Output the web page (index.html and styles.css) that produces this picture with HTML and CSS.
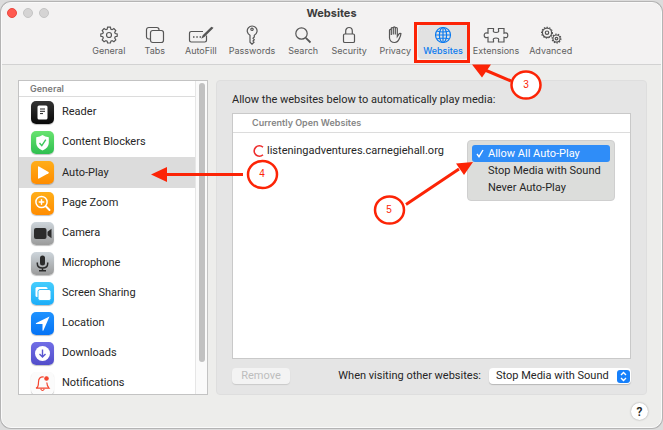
FILE: index.html
```html
<!DOCTYPE html>
<html lang="en">
<head>
    <meta charset="UTF-8">
    <meta name="viewport" content="width=device-width, initial-scale=1.0">
    <title>Websites</title>
    <link rel="stylesheet" href="styles.css">
</head>
<body>
    <div class="window">
        <header class="titlebar">
            <div class="title-row">
                <div class="lights">
                    <button class="light close" aria-label="Close"></button>
                    <button class="light" aria-label="Minimize"></button>
                    <button class="light" aria-label="Zoom"></button>
                </div>
                <h1>Websites</h1>
            </div>
            <nav class="toolbar">
                <button class="tab">
                    <svg width="18" height="18" viewBox="0 0 18 18"><path d="M7.6 1.2h2.8l.5 2 1.2.5 1.8-1.1 1.9 1.9-1.1 1.8.5 1.2 2 .5v2.2l-2 .6-.5 1.2 1.1 1.8-1.9 1.9-1.8-1.1-1.2.5-.5 1.9H7.6l-.5-1.9-1.2-.5-1.8 1.1-1.9-1.9 1.1-1.8-.5-1.2-2-.6V8l2-.5.5-1.2-1.1-1.8 1.9-1.9 1.8 1.1 1.2-.5z"/><circle cx="9" cy="9" r="2.5"/></svg>
                    <span>General</span>
                </button>
                <button class="tab">
                    <svg width="20" height="18" viewBox="0 0 20 18"><path d="M5.500 13H3.700A2.200 2.200 0 0 1 1.500 10.800V3.700A2.200 2.200 0 0 1 3.700 1.500h8.100A2.200 2.200 0 0 1 14 3.700V4.500"/><rect x="5.500" y="4.500" width="13" height="12" rx="2.200"/></svg>
                    <span>Tabs</span>
                </button>
                <button class="tab">
                    <svg width="26" height="18" viewBox="0 0 26 18"><path d="M15 5.500H3.200A1.700 1.700 0 0 0 1.500 7.200v7.100A1.700 1.700 0 0 0 3.200 16h13.600a1.700 1.700 0 0 0 1.700-1.700V9.500"/><path d="M24.500 2L16 10.500l-1.500.8.700-1.600L23.500 1.500z"/><path class="dots" d="M5 11h1.500M8.300 11h1.500M11.600 11h1.500"/></svg>
                    <span>AutoFill</span>
                </button>
                <button class="tab">
                    <svg width="14" height="20" viewBox="0 0 14 20"><path d="M5 10.300A4.900 4.900 0 1 1 9.300 10.300V12l-1.300 1.300 1.300 1.400-1.300 1.400 1 1.100-2 2-2-2z"/><circle cx="7" cy="4.300" r="1.200"/></svg>
                    <span>Passwords</span>
                </button>
                <button class="tab">
                    <svg width="18" height="18" viewBox="0 0 18 18"><circle cx="7.500" cy="7.500" r="5.700"/><path class="heavy" d="M11.800 11.800L16.500 16.500"/></svg>
                    <span>Search</span>
                </button>
                <button class="tab">
                    <svg width="14" height="18" viewBox="0 0 14 18"><rect x="1.500" y="8" width="11" height="8.500" rx="1.300"/><path d="M3.700 8V5a3.300 3.500 0 0 1 6.600 0v3"/></svg>
                    <span>Security</span>
                </button>
                <button class="tab">
                    <svg width="18" height="18" viewBox="0 0 18 18"><path d="M3.500 10V4.300q0-1 .9-1t.9 1V9V2.500q0-1 1-1t1 1V8.500V1.900q0-1 1-1t1 1V8.500V2.500q0-1 1-1t1 1V10.500l1.700-2.600q.8-1 1.900-.3-.2 2.200-1.300 4.400Q12 16.500 8.700 16.500 4 16.500 3.500 12z"/></svg>
                    <span>Privacy</span>
                </button>
                <button class="tab active">
                    <svg width="18" height="18" viewBox="0 0 18 18"><circle cx="9" cy="9" r="7.500"/><ellipse cx="9" cy="9" rx="3.600" ry="7.500"/><path d="M9 1.500v15M1.500 9h15M2.800 5Q9 7 15.200 5M2.800 13Q9 11 15.200 13"/></svg>
                    <span>Websites</span>
                </button>
                <button class="tab">
                    <svg width="26" height="18" viewBox="0 0 26 18"><path d="M5 2.500H10.500V4Q9.500 6.500 13 6.500T15.500 4V2.500H21V7.300Q24.800 6 24.800 9.300T21 11.300V16H15.500V14.500Q16.500 12 13 12T10.500 14.500V16H5V11.300Q1.200 12.500 1.200 9.300T5 7.300z"/></svg>
                    <span>Extensions</span>
                </button>
                <button class="tab">
                    <svg width="24" height="18" viewBox="0 0 24 18"><circle class="teeth" cx="8" cy="6.700" r="5.400"/><circle cx="8" cy="6.700" r="4.600"/><circle cx="8" cy="6.700" r="1.700"/><circle class="teeth" cx="17.500" cy="12.600" r="4.400"/><circle cx="17.500" cy="12.600" r="3.600"/><circle cx="17.500" cy="12.600" r="1.300"/></svg>
                    <span>Advanced</span>
                </button>
            </nav>
        </header>

        <main class="content">
            <aside class="sidebar">
                <div class="list">
                    <h2>General</h2>
                    <button class="item">
                        <span class="icon black"><svg viewBox="0 0 23 23"><rect x="6.500" y="4.500" width="10" height="14" rx="1.500" fill="#fff"/><path d="M9 8h5M9 10.300h5M9 12.600h3" stroke="#222"/></svg></span>
                        Reader
                    </button>
                    <button class="item">
                        <span class="icon green"><svg viewBox="0 0 23 23"><path d="M11.500 4Q14 6 17.800 6.300V12q0 4.500-6.300 7.500Q5.200 16.500 5.200 12V6.300Q9 6 11.500 4z" fill="#fff"/><path d="M8.500 12l2.300 2.700 4-6" fill="none" stroke="#3cc75a" stroke-width="1.400"/></svg></span>
                        Content Blockers
                    </button>
                    <button class="item selected">
                        <span class="icon orange"><svg viewBox="0 0 23 23"><path d="M7 6v11q0 1 1 .5l9.500-5.300q.8-.7 0-1.300L8 5.500Q7 5 7 6z" fill="#fff"/></svg></span>
                        Auto-Play
                    </button>
                    <button class="item">
                        <span class="icon orange"><svg viewBox="0 0 23 23" fill="none" stroke="#fff" stroke-width="1.500" stroke-linecap="round"><circle cx="10.500" cy="10" r="5.600"/><path d="M8.300 10h4.400M10.500 7.800v4.400"/><path d="M14.800 14.300l3.700 3.700" stroke-width="2"/></svg></span>
                        Page Zoom
                    </button>
                    <button class="item">
                        <span class="icon gray"><svg viewBox="0 0 23 23" fill="#2b2b2b"><rect x="3" y="6" width="12.500" height="11" rx="2"/><path d="M16.500 9.700L20.500 6.700v9.600l-4-3z"/></svg></span>
                        Camera
                    </button>
                    <button class="item">
                        <span class="icon gray"><svg viewBox="0 0 23 23"><rect x="9" y="3.500" width="5" height="10" rx="2.500" fill="#2b2b2b"/><path d="M6.300 10.500v1q0 4.500 5.200 4.500t5.200-4.500v-1M11.500 16v2.500M8 18.700h7" fill="none" stroke="#2b2b2b" stroke-width="1.500"/></svg></span>
                        Microphone
                    </button>
                    <button class="item">
                        <span class="icon sky"><svg viewBox="0 0 23 23" fill="#fff"><rect x="4.500" y="5" width="12" height="10" rx="1.500"/><rect x="7" y="7.500" width="13" height="11" rx="2" stroke="#31bdfb"/></svg></span>
                        Screen Sharing
                    </button>
                    <button class="item">
                        <span class="icon blue"><svg viewBox="0 0 23 23"><path d="M18.500 4.500L12.500 18.300q-.7 1-1 0V12H5.200q-1-.4 0-1z" fill="#fff"/></svg></span>
                        Location
                    </button>
                    <button class="item">
                        <span class="icon purple"><svg viewBox="0 0 23 23"><circle cx="11.500" cy="11.500" r="7.500" fill="#fff"/><path d="M11.500 7.500v7.500M8.500 12l3 3 3-3" fill="none" stroke="#5a56d0" stroke-width="1.400"/></svg></span>
                        Downloads
                    </button>
                    <button class="item">
                        <span class="icon white"><svg viewBox="0 0 23 23" fill="none" stroke="#f4452f" stroke-width="1.200"><path d="M12.800 5Q7.500 4.500 7.500 10T5 16.200H18Q16 14 15.800 10.500M9.700 17q1.800 3 3.600 0"/><circle cx="15.500" cy="6.500" r="1.700" fill="#f4452f"/></svg></span>
                        Notifications
                    </button>
                </div>
                <div class="scrollbar"><div class="thumb"></div></div>
            </aside>

            <section class="panel">
                <p class="lead">Allow the websites below to automatically play media:</p>
                <div class="sites">
                    <h3>Currently Open Websites</h3>
                    <div class="site">
                        <svg class="favicon" width="12" height="14" viewBox="0 0 12 14"><path d="M11 3.300A5.200 5.200 0 1 0 11 10.700"/></svg>
                        <span>listeningadventures.carnegiehall.org</span>
                        <div class="menu" role="menu">
                            <button class="option checked" role="menuitemradio" aria-checked="true">
                                <svg class="check" width="8" height="9" viewBox="0 0 8 9"><path d="M1 5l2 2.700L7 1"/></svg>
                                Allow All Auto-Play
                            </button>
                            <button class="option" role="menuitemradio" aria-checked="false">Stop Media with Sound</button>
                            <button class="option" role="menuitemradio" aria-checked="false">Never Auto-Play</button>
                        </div>
                    </div>
                </div>
                <div class="actions">
                    <button class="remove" disabled>Remove</button>
                    <label for="otherSites">When visiting other websites:</label>
                    <div class="popup">
                        <select id="otherSites">
                            <option>Stop Media with Sound</option>
                            <option>Allow All Auto-Play</option>
                            <option>Never Auto-Play</option>
                        </select>
                        <svg class="arrows" width="13" height="13" viewBox="0 0 13 13"><rect width="13" height="13" rx="3"/><path d="M4 5l2.500-2.500L9 5M4 8l2.500 2.500L9 8"/></svg>
                    </div>
                </div>
            </section>
        </main>

        <footer class="footer">
            <button class="help" aria-label="Help">?</button>
        </footer>
    </div>

    <!-- numbered step callouts -->
    <svg class="callouts" width="663" height="430" viewBox="0 0 663 430">
        <rect x="415.500" y="23.500" width="53" height="38"/>
        <path d="M511 81L485 70M243 174.500H165M406 204.500L459 169"/>
        <path class="head" d="M472 64.500h19l-9 13zM151 174.500l16-7.500v15zM473 162l-17 1.500 8 11.500z"/>
        <ellipse cx="526" cy="85" rx="14.500" ry="13.500"/>
        <ellipse cx="262.500" cy="174.500" rx="14.500" ry="13.500"/>
        <ellipse cx="389.500" cy="210" rx="14.500" ry="13.500"/>
        <text x="526" y="88">3</text>
        <text x="262" y="177">4</text>
        <text x="389" y="213">5</text>
    </svg>
</body>
</html>
```

FILE: styles.css
```css
* {
    box-sizing: border-box;
}
body {
    font-family: Roboto, "Liberation Sans", sans-serif;
    font-size: 11px;
    line-height: 16px;
    color: #262626;
    background-color: #dcdcdc;
    margin: 0;
    height: 100vh;
    padding: 2px 1px;
}
h1, h2, h3, p {
    margin: 0;
}
button, select {
    font: inherit;
    color: inherit;
    border: none;
    padding: 0;
    background: none;
}
.window {
    display: flex;
    flex-direction: column;
    height: 100%;
    background-color: #ededeb;
    border: 1px solid #fafafa;
    border-radius: 10px;
    box-shadow: 0 0 0 1px #b4b4b4;
    overflow: hidden;
}

/* title bar */
.titlebar {
    font-family: Inter, "Liberation Sans", sans-serif;
    background-color: #f3f2f2;
    border-bottom: 1px solid #d2d2d2;
    height: 62px;
}
.title-row {
    display: grid;
    grid-template-columns: 1fr auto 1fr;
    align-items: center;
    height: 20px;
}
.title-row h1 {
    font-size: 11px;
    font-weight: 700;
    color: #3c3c3c;
}
.lights {
    display: flex;
    gap: 6px;
    padding-left: 5px;
}
.light {
    width: 10px;
    height: 10px;
    border-radius: 50%;
    background-color: #d5d4d4;
    border: 1px solid #c4c4c4;
}
.light.close {
    background-color: #ff5a50;
    border-color: #e9483f;
}
.toolbar {
    display: flex;
    justify-content: center;
    padding-top: 2px;
}
.tab {
    display: flex;
    flex-direction: column;
    align-items: center;
    min-width: 46px;
    height: 34px;
    padding: 0 5px;
    border-radius: 4px;
    font-size: 9px;
    line-height: 12px;
    color: #606060;
}
.tab svg {
    height: 20px;
    fill: none;
    stroke: #565656;
    stroke-width: 1.2;
}
.tab .dots {
    stroke-width: 1.6;
}
.tab .heavy {
    stroke-width: 1.8;
}
.tab .teeth {
    stroke-width: 1.2;
    stroke-dasharray: 1.4 1.3;
}
.tab.active {
    background-color: #e2e2e2;
    color: #0a7aef;
    font-weight: 500;
}
.tab.active svg {
    stroke: #0a7aef;
}

/* body */
.content {
    flex: 1;
    display: grid;
    grid-template-columns: 190px 1fr;
    gap: 8px;
    min-height: 0;
    padding: 15px 14px 0 16px;
}
.sidebar {
    display: flex;
    min-height: 0;
    background-color: #ffffff;
    border: 1px solid #c3c3c3;
    overflow: hidden;
}
.list {
    flex: 1;
    overflow: hidden;
}
.list h2 {
    font-family: Inter, "Liberation Sans", sans-serif;
    font-size: 9px;
    font-weight: 600;
    line-height: 15px;
    color: #7b7b7b;
    padding-left: 11px;
    border-bottom: 1px solid #dcdcdc;
}
.item {
    display: flex;
    align-items: center;
    gap: 8px;
    width: 100%;
    height: 30px;
    padding-left: 12px;
    text-align: left;
}
.item.selected {
    height: 31px;
    background-color: #dcdcdc;
}
.icon {
    width: 23px;
    height: 23px;
    border-radius: 5px;
    box-shadow: 0 1px 1px rgba(0,0,0,0.25);
}
.icon svg {
    display: block;
}
.icon.black {
    background: linear-gradient(#333333, #080808);
}
.icon.green {
    background: linear-gradient(#68e36f, #2fbf50);
}
.icon.orange {
    background: linear-gradient(#ffae1a, #ff8c00);
}
.icon.gray {
    background: linear-gradient(#cdd5db, #9b9b9b);
}
.icon.sky {
    background: linear-gradient(#46cdfd, #1cadf8);
}
.icon.blue {
    background: linear-gradient(#1f93ff, #0573f5);
}
.icon.purple {
    background: linear-gradient(#716ee6, #524dca);
}
.icon.white {
    background: #fbfbfb;
}
.scrollbar {
    width: 12px;
    padding: 2px 2px 32px 3px;
    background-color: #fafafa;
    border-left: 1px solid #e6e6e6;
}
.thumb {
    width: 6px;
    height: 100%;
    border-radius: 3px;
    background-color: #c1c1c1;
}

.panel {
    display: flex;
    flex-direction: column;
    min-width: 0;
    padding: 11px 15px 10px;
    background-color: #e5e5e5;
    border: 1px solid #dedede;
    border-radius: 4px;
}
.lead {
    margin-bottom: 5px;
}
.sites {
    flex: 1;
    background-color: #ffffff;
    border: 1px solid #c9c9c9;
}
.sites h3 {
    font-family: Inter, "Liberation Sans", sans-serif;
    font-size: 9px;
    font-weight: 600;
    line-height: 18px;
    color: #858585;
    padding-left: 19px;
    border-bottom: 1px solid #dcdcdc;
}
.site {
    position: relative;
    display: flex;
    align-items: center;
    gap: 3px;
    height: 36px;
    padding-left: 19px;
}
.favicon {
    fill: none;
    stroke: #ee2c2c;
    stroke-width: 1.6;
}
.menu {
    position: absolute;
    top: 7px;
    right: 15px;
    width: 148px;
    padding: 4px;
    background-color: #dcdddb;
    border: 1px solid #cfcfcf;
    border-radius: 4px;
}
.option {
    display: block;
    position: relative;
    width: 100%;
    padding-left: 16px;
    line-height: 17px;
    text-align: left;
    white-space: nowrap;
    border-radius: 3px;
}
.option.checked {
    background-color: #2f8df8;
    color: #ffffff;
}
.check {
    position: absolute;
    left: 4px;
    top: 4px;
    fill: none;
    stroke: #ffffff;
    stroke-width: 1.4;
}
.actions {
    display: flex;
    align-items: center;
    gap: 8px;
    margin-top: 9px;
}
.remove {
    width: 58px;
    height: 16px;
    margin-right: auto;
    color: #bdbdbd;
    background-color: #f3f3f3;
    border-radius: 4px;
    box-shadow: 0 1px 1px rgba(0,0,0,0.12);
}
.popup {
    position: relative;
}
.popup select {
    display: block;
    appearance: none;
    width: 142px;
    height: 16px;
    padding: 0 16px 0 7px;
    background-color: #ffffff;
    border-radius: 4px;
    box-shadow: 0 1px 1px rgba(0,0,0,0.2);
}
.arrows {
    position: absolute;
    top: 2px;
    right: 1px;
    fill: #1680fb;
    pointer-events: none;
}
.arrows path {
    fill: none;
    stroke: #ffffff;
    stroke-width: 1.4;
}

.footer {
    display: flex;
    justify-content: flex-end;
    height: 32px;
    padding: 8px 13px 0 0;
}
.help {
    width: 17px;
    height: 17px;
    border-radius: 50%;
    background-color: #ffffff;
    font-size: 12px;
    font-weight: 600;
    box-shadow: 0 0 2px rgba(0,0,0,0.35);
}

.callouts {
    position: absolute;
    top: 0;
    left: 0;
    fill: none;
    stroke: #fc2406;
    stroke-width: 3;
    pointer-events: none;
}
.callouts .head {
    fill: #fc2406;
    stroke: none;
}
.callouts ellipse {
    fill: #ffffff;
    stroke-width: 2.5;
}
.callouts text {
    font-family: "Liberation Sans", Arial, sans-serif;
    font-size: 10px;
    text-anchor: middle;
    fill: #fc2406;
    stroke: none;
}
```
